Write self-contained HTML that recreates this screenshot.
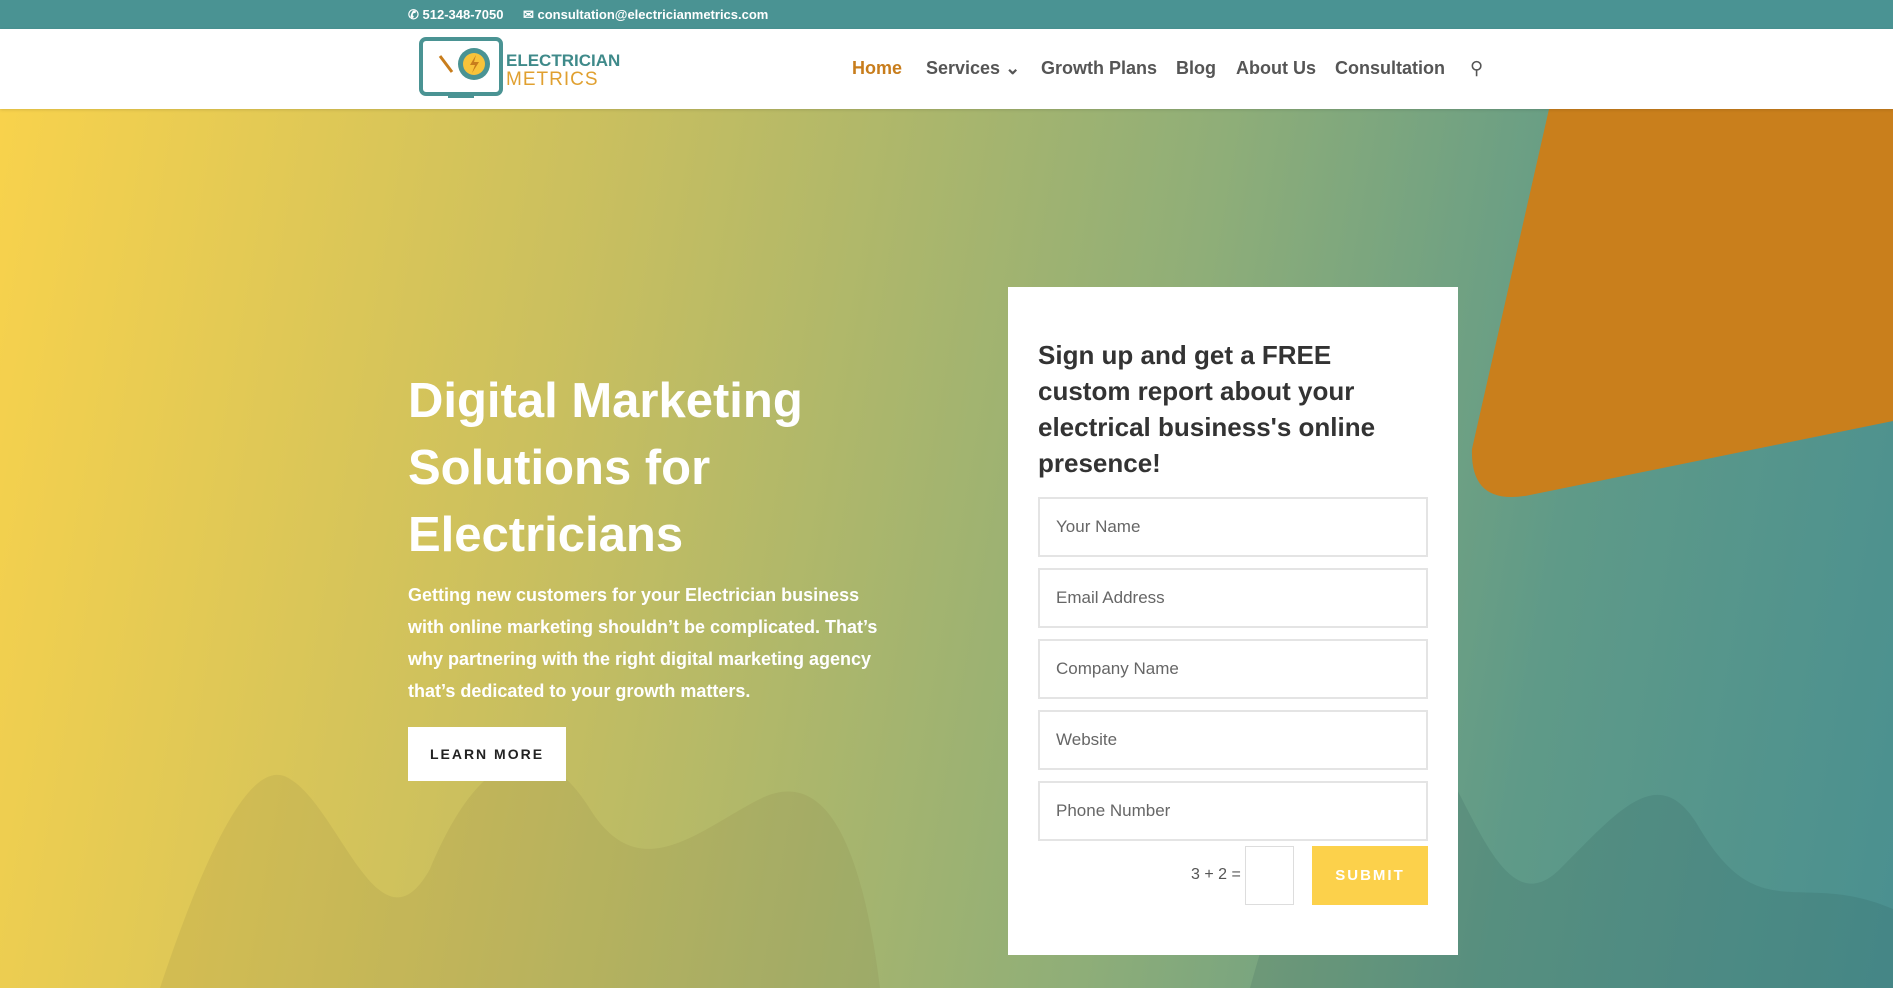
<!DOCTYPE html>
<html><head><meta charset="utf-8"><style>
*{margin:0;padding:0;box-sizing:border-box}
body{width:1893px;height:988px;overflow:hidden;font-family:"Liberation Sans",sans-serif;position:relative;background:#fff}
.top{position:absolute;left:0;top:0;width:1893px;height:29px;background:#4a9393;color:#fff;font-size:13px;font-weight:bold}
.top span{position:absolute;top:7px}
.hdr{position:absolute;top:29px;left:0;width:1893px;height:80px;background:#fff;box-shadow:0 1px 3px rgba(0,0,0,.12);z-index:3}
.nav a{position:absolute;top:29px;font-size:18px;color:#555;text-decoration:none;font-weight:bold}
.hero{position:absolute;top:109px;left:0;width:1893px;height:879px;background:linear-gradient(100deg,#f8d24c 0%,#c9bf5f 30%,#8fae78 60%,#5f9a88 80%,#4a9090 100%);overflow:hidden}
h1{position:absolute;left:408px;top:259px;color:#fff;font-size:49px;line-height:67px;font-weight:bold;width:520px}
.p{position:absolute;left:408px;top:470px;width:490px;color:#fff;font-size:18px;line-height:32px;font-weight:bold}
.btn{position:absolute;left:408px;top:618px;width:158px;height:54px;background:#fff;color:#222;font-size:14px;font-weight:bold;letter-spacing:2px;text-align:center;line-height:54px}
.card{position:absolute;left:1008px;top:287px;width:450px;height:668px;background:#fff}
.card h2{position:absolute;left:30px;top:50px;width:390px;font-size:26px;line-height:36px;color:#333;font-weight:bold}
.in{position:absolute;left:30px;width:390px;height:60px;border:2px solid #e4e4e4;color:#666;font-size:17px;padding-left:16px;line-height:56px}
</style></head><body>
<div class="top"><span style="left:408px">&#9990; 512-348-7050</span><span style="left:523px">&#9993; consultation@electricianmetrics.com</span></div>
<div class="hdr">
<svg style="position:absolute;left:418px;top:7px" width="90" height="64" viewBox="0 0 90 64">
<rect x="3" y="3" width="80" height="55" rx="5" fill="none" stroke="#4a9393" stroke-width="4"/>
<circle cx="56" cy="28" r="16" fill="#4a9393"/><circle cx="56" cy="28" r="11" fill="#f8c33a"/>
<path d="M58 19l-6 10h5l-3 8 7-11h-5z" fill="#c87d1c"/>
<path d="M22 20l12 16" stroke="#c87d1c" stroke-width="3"/>
<rect x="30" y="58" width="26" height="4" fill="#4a9393"/></svg>
<div style="position:absolute;left:506px;top:22px;font-size:17px;font-weight:bold;color:#3f8a8a">ELECTRICIAN</div>
<div style="position:absolute;left:506px;top:40px;font-size:19px;color:#e0a030;letter-spacing:1px">METRICS</div>
<div class="nav"><a style="left:852px;color:#c87d1c">Home</a><a style="left:926px">Services &#8964;</a><a style="left:1041px">Growth Plans</a><a style="left:1176px">Blog</a><a style="left:1236px">About Us</a><a style="left:1335px">Consultation</a><a style="left:1470px;font-weight:normal">&#9906;</a></div>
</div>
<div class="hero">
<svg style="position:absolute;left:0;top:0" width="1893" height="879">
<path d="M160 879C220 700 260 650 290 670C340 700 380 850 430 760C480 640 540 620 590 700C640 780 700 720 760 690C820 660 860 720 880 879Z" fill="rgba(120,110,60,0.12)"/>
<path d="M1250 879C1300 700 1360 570 1420 620C1470 680 1500 820 1560 760C1620 700 1660 650 1700 720C1760 820 1800 760 1893 800V879Z" fill="rgba(40,80,80,0.15)"/>
<path d="M1549 0H1893V312L1530 386Q1470 398 1472 340Z" fill="#c97f1c"/>
</svg>
<h1>Digital Marketing Solutions for Electricians</h1>
<div class="p">Getting new customers for your Electrician business with online marketing shouldn’t be complicated. That’s why partnering with the right digital marketing agency that’s dedicated to your growth matters.</div>
<div class="btn">LEARN MORE</div>
</div>
<div class="card">
<h2>Sign up and get a FREE custom report about your electrical business's online presence!</h2>
<div class="in" style="top:210px">Your Name</div>
<div class="in" style="top:281px">Email Address</div>
<div class="in" style="top:352px">Company Name</div>
<div class="in" style="top:423px">Website</div>
<div class="in" style="top:494px">Phone Number</div>
<div style="position:absolute;left:183px;top:579px;font-size:16px;color:#555">3 + 2 =</div>
<div style="position:absolute;left:237px;top:559px;width:49px;height:59px;border:1px solid #ddd"></div>
<div style="position:absolute;left:304px;top:559px;width:116px;height:59px;background:#fcd14b;color:#fff;font-weight:bold;font-size:15px;letter-spacing:2px;text-align:center;line-height:59px">SUBMIT</div>
</div>
</body></html>
